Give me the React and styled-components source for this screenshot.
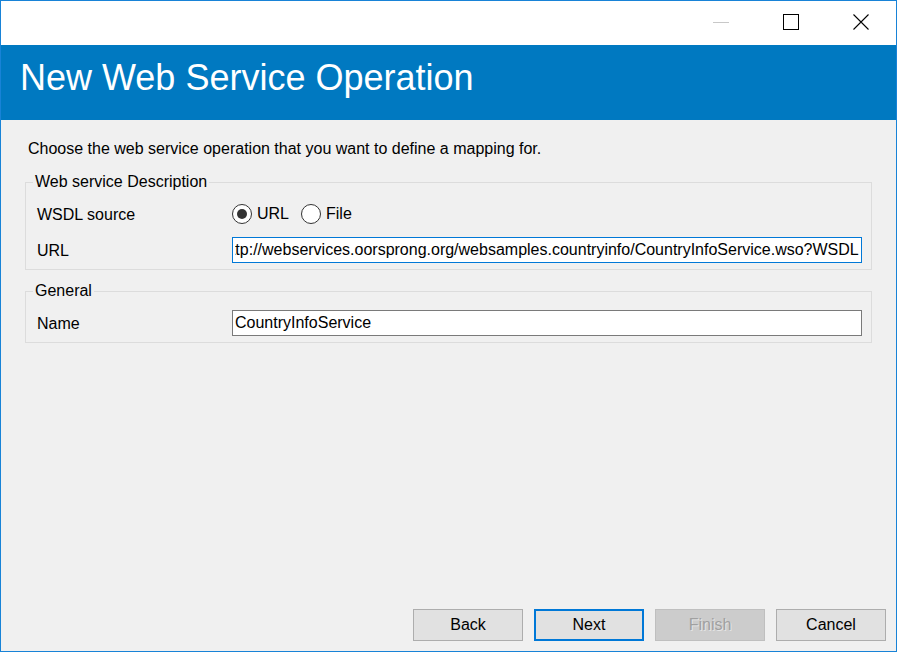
import React, { useEffect, useRef } from 'react';
import styled, { createGlobalStyle } from 'styled-components';

const GlobalStyle = createGlobalStyle`
  html, body {
    margin: 0;
    padding: 0;
    background: #ffffff;
  }
  * {
    box-sizing: border-box;
  }
`;

const Window = styled.div`
  width: 897px;
  height: 652px;
  display: flex;
  flex-direction: column;
  border: 1px solid #1883d7;
  background: #f0f0f0;
  font-family: "Liberation Sans", Arial, sans-serif;
  font-size: 16px;
  color: #000;
`;

const TitleBar = styled.div`
  height: 44px;
  flex: none;
  display: flex;
  justify-content: flex-end;
  background: #ffffff;
`;

const CaptionButton = styled.div`
  width: 70px;
  height: 44px;
  display: flex;
  align-items: center;
  justify-content: center;
  margin-top: -1px;
`;

const Header = styled.div`
  height: 75px;
  flex: none;
  padding: 13px 20px 0 19px;
  background: #0079c1;
  color: #ffffff;
  font-size: 36px;
  line-height: 40px;
`;

const Content = styled.div`
  flex: 1;
  display: flex;
  flex-direction: column;
  padding: 20px 24px 0;
`;

const Intro = styled.p`
  margin: 0 0 15px 3px;
  line-height: 18px;
`;

const Group = styled.fieldset`
  margin: 0 0 ${(p) => p.$gap || 0}px;
  padding: 10px 9px ${(p) => p.$bottom || 6}px 11px;
  border: 1px solid #dcdcdc;
  min-width: 0;
`;

const Legend = styled.legend`
  margin-left: -4px;
  padding: 0 2px;
  line-height: 18px;
`;

const Rows = styled.div`
  display: flex;
  flex-direction: column;
  gap: 10px;
`;

const Row = styled.div`
  display: grid;
  grid-template-columns: 195px 1fr;
  align-items: center;
  min-height: 26px;
`;

const Label = styled.span`
  padding-top: 2px;
  line-height: 18px;
`;

const RadioGroup = styled.div`
  display: flex;
  align-items: center;
  gap: 12px;
`;

const RadioOption = styled.label`
  display: flex;
  align-items: center;
  gap: 5px;
  line-height: 18px;
`;

const RadioCircle = styled.span`
  width: 20px;
  height: 20px;
  border-radius: 50%;
  border: 1px solid #333333;
  background: #ffffff;
  display: flex;
  align-items: center;
  justify-content: center;

  &::after {
    content: '';
    width: 10px;
    height: 10px;
    border-radius: 50%;
    background: ${(p) => (p.$checked ? '#333333' : 'transparent')};
  }
`;

const TextBox = styled.input`
  width: 100%;
  height: 26px;
  margin: 0;
  padding: 0 2px;
  border: 1px solid ${(p) => (p.$focused ? '#0078d7' : '#7a7a7a')};
  background: #ffffff;
  font-family: "Liberation Sans", Arial, sans-serif;
  font-size: 16px;
  color: #000;
  outline: none;
`;

const Spacer = styled.div`
  flex: 1;
`;

const ButtonBar = styled.div`
  display: flex;
  justify-content: flex-end;
  gap: 11px;
  padding: 0 10px 10px;
`;

const Button = styled.button`
  width: 110px;
  height: 32px;
  margin: 0;
  padding: 0;
  font-family: "Liberation Sans", Arial, sans-serif;
  font-size: 16px;
  color: #000;
  background: #e1e1e1;
  border: ${(p) => (p.$default ? '2px solid #0078d7' : '1px solid #adadad')};

  &:disabled {
    background: #cccccc;
    border-color: #bfbfbf;
    color: #a0a0a0;
    text-shadow: 1px 1px 0 #e6e6e6;
  }
`;

const Minimize = () => (
  <svg width="16" height="16" viewBox="0 0 16 16">
    <path d="M0 8.5h16" stroke="#c8c8c8" strokeWidth="1" />
  </svg>
);

const Maximize = () => (
  <svg width="16" height="16" viewBox="0 0 16 16">
    <rect x="0.5" y="0.5" width="15" height="15" fill="none" stroke="#000" strokeWidth="1" />
  </svg>
);

const Close = () => (
  <svg width="16" height="16" viewBox="0 0 16 16">
    <path d="M0.5 0.5l15 15M15.5 0.5l-15 15" stroke="#000" strokeWidth="1.1" />
  </svg>
);

const Radio = ({ checked, children }) => (
  <RadioOption>
    <RadioCircle $checked={checked} />
    {children}
  </RadioOption>
);

const App = () => {
  const urlRef = useRef(null);

  useEffect(() => {
    // the field is scrolled to its end, as in the focused dialog
    if (urlRef.current) urlRef.current.scrollLeft = urlRef.current.scrollWidth;
  }, []);

  return (
    <>
      <GlobalStyle />
      <Window>
        <TitleBar>
          <CaptionButton><Minimize /></CaptionButton>
          <CaptionButton><Maximize /></CaptionButton>
          <CaptionButton><Close /></CaptionButton>
        </TitleBar>
        <Header>New Web Service Operation</Header>
        <Content>
          <Intro>Choose the web service operation that you want to define a mapping for.</Intro>
          <Group $gap={12}>
            <Legend>Web service Description</Legend>
            <Rows>
              <Row>
                <Label>WSDL source</Label>
                <RadioGroup>
                  <Radio checked>URL</Radio>
                  <Radio>File</Radio>
                </RadioGroup>
              </Row>
              <Row>
                <Label>URL</Label>
                <TextBox
                  ref={urlRef}
                  $focused
                  readOnly
                  value="http://webservices.oorsprong.org/websamples.countryinfo/CountryInfoService.wso?WSDL"
                />
              </Row>
            </Rows>
          </Group>
          <Group $bottom={6}>
            <Legend>General</Legend>
            <Rows>
              <Row>
                <Label>Name</Label>
                <TextBox readOnly value="CountryInfoService" />
              </Row>
            </Rows>
          </Group>
          <Spacer />
        </Content>
        <ButtonBar>
          <Button>Back</Button>
          <Button $default>Next</Button>
          <Button disabled>Finish</Button>
          <Button>Cancel</Button>
        </ButtonBar>
      </Window>
    </>
  );
};

export default App;
